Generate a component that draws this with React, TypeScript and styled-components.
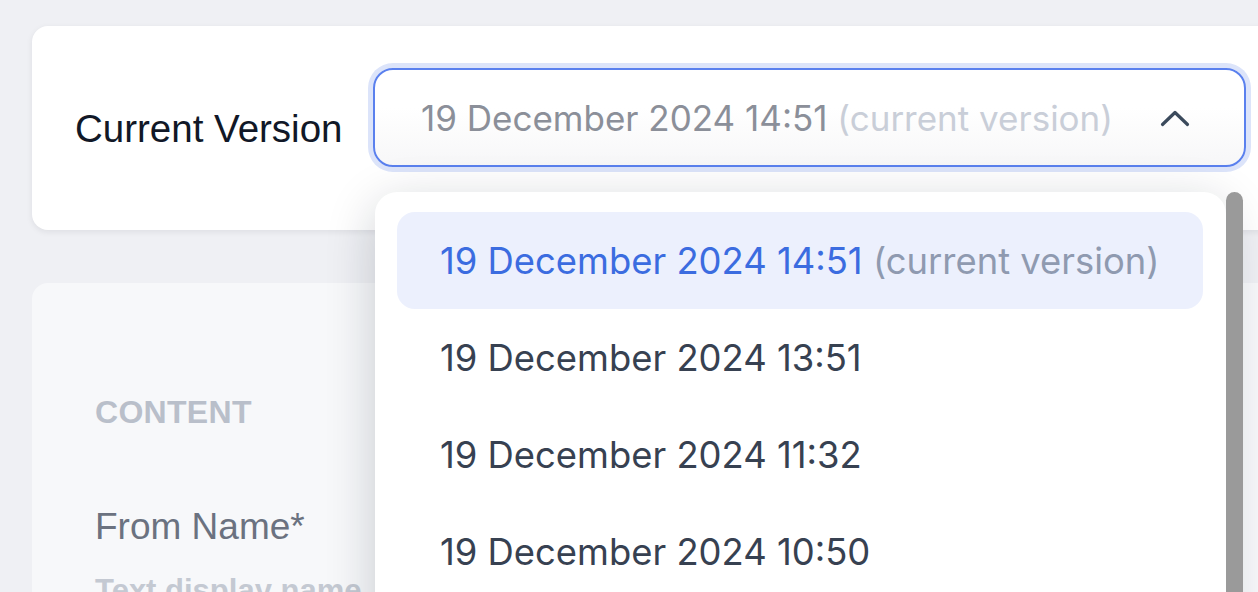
import React, { FC } from 'react';
import styled, { createGlobalStyle } from 'styled-components';

const GlobalStyle = createGlobalStyle`
  html, body {
    margin: 0;
    padding: 0;
    width: 1258px;
    height: 592px;
    overflow: hidden;
    background: #eff0f4;
    font-family: "Liberation Sans", Arial, sans-serif;
  }
`;

interface Version {
  label: string
  current?: boolean
}

const versions: Version[] = [
  { label: '19 December 2024 14:51', current: true },
  { label: '19 December 2024 13:51' },
  { label: '19 December 2024 11:32' },
  { label: '19 December 2024 10:50' },
  { label: '19 December 2024 09:17' },
];

const ChevronUp: FC = () => (
  <svg width="30" height="18" viewBox="0 0 30 18" fill="none">
    <path d="M2.5 15.5L15 3.5L27.5 15.5" stroke="#3b4a5c" strokeWidth="3.2" strokeLinecap="round" strokeLinejoin="round" />
  </svg>
);

const VersionSelect: FC = () => (
  <SelectWrapper>
    <SelectBox>
      <SelectValue>
        19 December 2024 14:51 <Muted>(current version)</Muted>
      </SelectValue>
      <ChevronUp />
    </SelectBox>
    <Dropdown>
      <OptionList>
        {versions.map((v) => (
          <Option key={v.label} $selected={v.current}>
            {v.label}
            {v.current && <OptionNote> (current version)</OptionNote>}
          </Option>
        ))}
      </OptionList>
      <ScrollThumb />
    </Dropdown>
  </SelectWrapper>
);

export default function App() {
  return (
    <>
      <GlobalStyle />
      <Page>
        <VersionCard>
          <FieldLabel>Current Version</FieldLabel>
          <VersionSelect />
        </VersionCard>
        <ContentCard>
          <SectionTitle>CONTENT</SectionTitle>
          <InputLabel>From Name*</InputLabel>
          <InputHint>Text display name</InputHint>
        </ContentCard>
      </Page>
    </>
  );
}

const Page = styled.div`
  display: flex;
  flex-direction: column;
  gap: 53px;
  padding: 26px 0 0 32px;
`
const VersionCard = styled.div`
  position: relative;
  z-index: 2;
  display: flex;
  align-items: flex-start;
  gap: 33px;
  width: 1300px;
  height: 204px;
  box-sizing: border-box;
  padding: 42px 0 0 43px;
  background: #fff;
  border-radius: 16px;
  box-shadow: 0 2px 6px rgba(20, 24, 40, 0.08);
`
const FieldLabel = styled.div`
  width: 265px;
  margin-top: 11px;
  line-height: 99px;
  font-size: 38.5px;
  color: #111827;
  white-space: nowrap;
`
const SelectWrapper = styled.div`
  position: relative;
`
const SelectBox = styled.div`
  display: flex;
  align-items: center;
  justify-content: space-between;
  width: 873px;
  height: 99px;
  box-sizing: border-box;
  padding: 0 54px 0 46px;
  border: 2px solid #5a80ee;
  border-radius: 20px;
  background: linear-gradient(180deg, #ffffff 40%, #f7f7f8 100%);
  box-shadow: 0 0 0 5px #dce4fa;
`
const SelectValue = styled.span`
  font-family: Inter, Roboto, sans-serif;
  font-size: 35px;
  color: #8b8f99;
  white-space: nowrap;
`
const Muted = styled.span`
  color: #c9ced8;
`
const Dropdown = styled.div`
  position: absolute;
  top: 124px;
  left: 2px;
  display: flex;
  width: 870px;
  height: 520px;
`
const OptionList = styled.div`
  flex: 1;
  display: flex;
  flex-direction: column;
  padding: 20px 23px 0 22px;
  background: #fff;
  border-radius: 22px 22px 0 0;
  box-shadow: 0 12px 50px rgba(17, 24, 39, 0.2);
`
const Option = styled.div<{ $selected?: boolean }>`
  display: flex;
  align-items: center;
  height: 97px;
  flex-shrink: 0;
  padding-left: 43px;
  border-radius: 18px;
  font-family: Inter, Roboto, sans-serif;
  font-size: 36.4px;
  white-space: pre;
  color: ${({ $selected }) => ($selected ? '#3b6ce0' : '#374151')};
  background: ${({ $selected }) => ($selected ? '#ecf0fd' : 'transparent')};
`
const OptionNote = styled.span`
  color: #8f9ab0;
`
const ScrollThumb = styled.div`
  width: 17px;
  height: 100%;
  margin-right: 2px;
  border-radius: 9px;
  background: #9a9a9a;
`
const ContentCard = styled.div`
  position: relative;
  z-index: 1;
  width: 1300px;
  height: 400px;
  box-sizing: border-box;
  padding: 113px 0 0 63px;
  background: #f7f8fa;
  border-radius: 16px;
`
const SectionTitle = styled.div`
  font-size: 32px;
  line-height: 1;
  font-weight: 700;
  letter-spacing: 0.3px;
  color: #b9bfca;
`
const InputLabel = styled.div`
  margin-top: 80px;
  font-size: 37px;
  line-height: 1;
  color: #6b7280;
`
const InputHint = styled.div`
  margin-top: 30px;
  font-size: 31px;
  line-height: 1;
  font-weight: 700;
  color: #c4c9d2;
`
